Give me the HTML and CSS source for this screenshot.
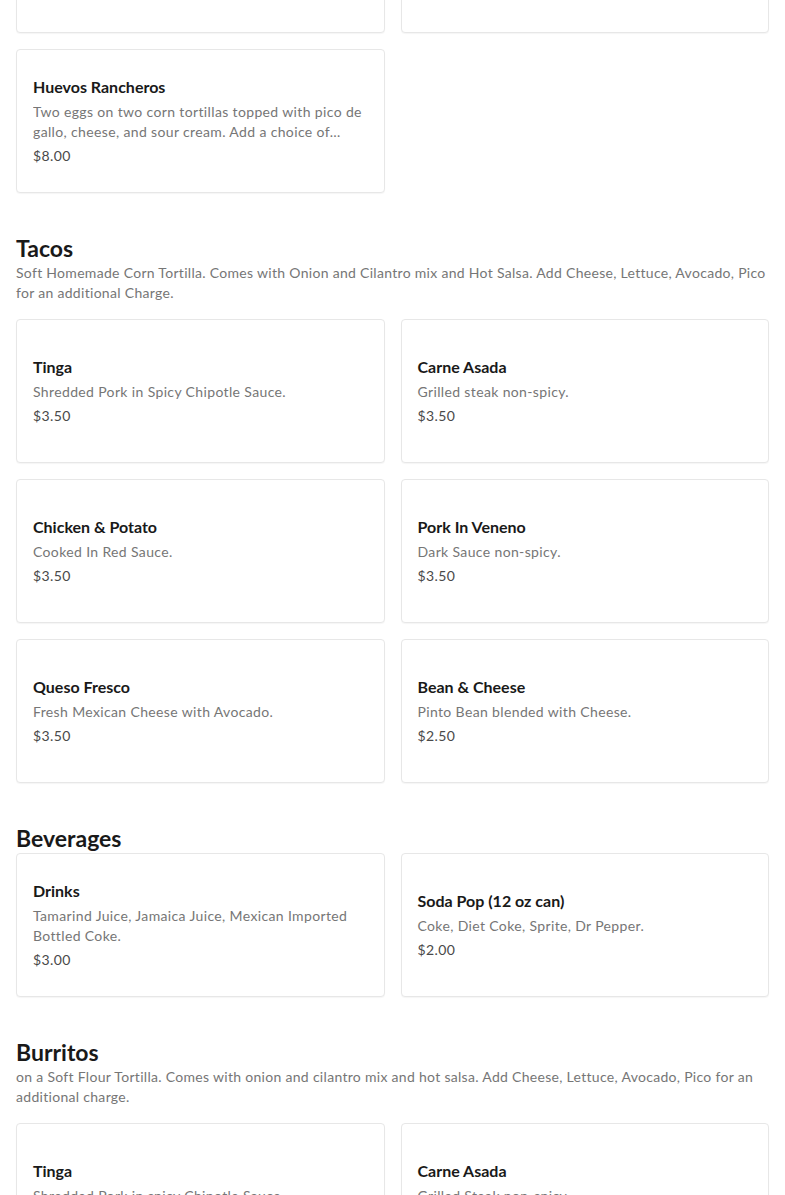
FILE: index.html
```html
<!DOCTYPE html>
<html lang="en">
<head>
<meta charset="utf-8">
<title>Menu</title>
<link rel="stylesheet" href="styles.css">
</head>
<body>
<main class="menu">
  <section class="section section-first">
    <div class="grid">
      <div class="card"><div class="card-body"><h3 class="item-title">Breakfast Burrito</h3><p class="item-desc">Eggs, potato, and cheese in a flour tortilla.</p><p class="item-price">$8.00</p></div></div>
      <div class="card"><div class="card-body"><h3 class="item-title">Chilaquiles</h3><p class="item-desc">Corn tortilla chips in red or green sauce.</p><p class="item-price">$8.00</p></div></div>
      <div class="card"><div class="card-body"><h3 class="item-title">Huevos Rancheros</h3><p class="item-desc clamp">Two eggs on two corn tortillas topped with pico de gallo, cheese, and sour cream. Add a choice of chorizo, ham, or bacon.</p><p class="item-price">$8.00</p></div></div>
    </div>
  </section>

  <section class="section">
    <h2 class="section-title">Tacos</h2>
    <p class="section-desc">Soft Homemade Corn Tortilla. Comes with Onion and Cilantro mix and Hot Salsa. Add Cheese, Lettuce, Avocado, Pico for an additional Charge.</p>
    <div class="grid">
      <div class="card"><div class="card-body"><h3 class="item-title">Tinga</h3><p class="item-desc">Shredded Pork in Spicy Chipotle Sauce.</p><p class="item-price">$3.50</p></div></div>
      <div class="card"><div class="card-body"><h3 class="item-title">Carne Asada</h3><p class="item-desc">Grilled steak non-spicy.</p><p class="item-price">$3.50</p></div></div>
      <div class="card"><div class="card-body"><h3 class="item-title">Chicken &amp; Potato</h3><p class="item-desc">Cooked In Red Sauce.</p><p class="item-price">$3.50</p></div></div>
      <div class="card"><div class="card-body"><h3 class="item-title">Pork In Veneno</h3><p class="item-desc">Dark Sauce non-spicy.</p><p class="item-price">$3.50</p></div></div>
      <div class="card"><div class="card-body"><h3 class="item-title">Queso Fresco</h3><p class="item-desc">Fresh Mexican Cheese with Avocado.</p><p class="item-price">$3.50</p></div></div>
      <div class="card"><div class="card-body"><h3 class="item-title">Bean &amp; Cheese</h3><p class="item-desc">Pinto Bean blended with Cheese.</p><p class="item-price">$2.50</p></div></div>
    </div>
  </section>

  <section class="section">
    <h2 class="section-title">Beverages</h2>
    <div class="grid">
      <div class="card"><div class="card-body"><h3 class="item-title">Drinks</h3><p class="item-desc">Tamarind Juice, Jamaica Juice, Mexican Imported Bottled Coke.</p><p class="item-price">$3.00</p></div></div>
      <div class="card"><div class="card-body"><h3 class="item-title">Soda Pop (12 oz can)</h3><p class="item-desc">Coke, Diet Coke, Sprite, Dr Pepper.</p><p class="item-price">$2.00</p></div></div>
    </div>
  </section>

  <section class="section">
    <h2 class="section-title">Burritos</h2>
    <p class="section-desc">on a Soft Flour Tortilla. Comes with onion and cilantro mix and hot salsa. Add Cheese, Lettuce, Avocado, Pico for an additional charge.</p>
    <div class="grid">
      <div class="card"><div class="card-body"><h3 class="item-title">Tinga</h3><p class="item-desc">Shredded Pork in spicy Chipotle Sauce.</p><p class="item-price">$9.00</p></div></div>
      <div class="card"><div class="card-body"><h3 class="item-title">Carne Asada</h3><p class="item-desc">Grilled Steak non-spicy.</p><p class="item-price">$9.00</p></div></div>
    </div>
  </section>
</main>
</body>
</html>
```

FILE: styles.css
```css
* { box-sizing: border-box; }
html, body { margin: 0; padding: 0; background: #ffffff; }
body {
  font-family: "Lato", "Liberation Sans", sans-serif;
  color: #191919;
  overflow: hidden;
}
.menu {
  padding: 0 16px;
}
.section {
  margin-top: 41px;
}
.section-first {
  margin-top: -111px;
}
.section-title {
  margin: 0 0 1px;
  font-size: 23px;
  line-height: 28px;
  font-weight: 700;
  color: #191919;
}
.section-desc {
  margin: 0 0 16px;
  font-size: 14px;
  line-height: 20px;
  color: #767676;
  letter-spacing: 0.3px;
}
.grid {
  display: grid;
  grid-template-columns: 1fr 1fr;
  gap: 16px;
}
.card {
  border: 1px solid #e7e7e7;
  border-radius: 4px;
  box-shadow: 0 1px 1px rgba(0,0,0,0.04);
  height: 144px;
  display: flex;
  align-items: center;
  padding: 0 16px;
  background: #fff;
}
.card-body { width: 100%; }
.item-title {
  margin: 0;
  font-size: 16px;
  line-height: 24px;
  font-weight: 700;
  color: #191919;
  position: relative;
  top: -1px;
}
.item-desc {
  margin: 2px 0 0;
  font-size: 14px;
  line-height: 20px;
  color: #767676;
  letter-spacing: 0.36px;
}
.clamp {
  display: -webkit-box;
  -webkit-line-clamp: 2;
  -webkit-box-orient: vertical;
  overflow: hidden;
}
.item-price {
  margin: 4px 0 0;
  font-size: 14px;
  line-height: 20px;
  color: #494949;
  letter-spacing: 0.4px;
}
```
